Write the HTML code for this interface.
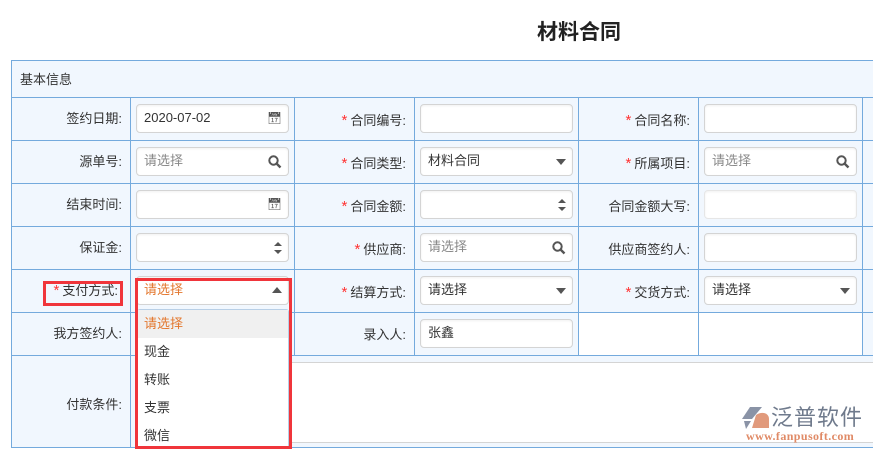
<!DOCTYPE html>
<html><head><meta charset="utf-8">
<style>
*{margin:0;padding:0;box-sizing:border-box}
body{width:873px;height:453px;overflow:hidden;background:#fff;font-family:"Liberation Sans","Noto Sans CJK SC",sans-serif;font-size:13px;color:#333;position:relative}
.a{position:absolute}
.title{left:0;width:1158px;top:16px;text-align:center;font-size:21px;font-weight:bold;color:#222}
.tbl{left:11px;top:60px;width:870px;height:388px;background:#f1f7fe;border:1px solid #74aadd}
.h{background:#74aadd}
.lab{text-align:right;height:20px;line-height:20px;white-space:nowrap}
.lab i{color:#f33;font-style:normal;margin-right:3px;font-size:15px}
.inp{background:#fff;border:1px solid #d4d4d4;border-radius:4px;height:29px;padding-left:7px;line-height:26px;box-shadow:inset 0 1px 2px rgba(0,0,0,.06)}
.ph{color:#888}
.ic{position:absolute;right:6px;top:0;color:#555}
</style></head><body>
<div class="a title">材料合同</div>
<div class="a tbl"></div>
<div class="a" style="left:20px;top:69px">基本信息</div>
<div class="a" style="left:579px;top:313px;width:283px;height:42px;background:#fff"></div>
<div class="a h" style="left:11px;top:97px;width:862px;height:1px"></div>
<div class="a h" style="left:11px;top:140px;width:862px;height:1px"></div>
<div class="a h" style="left:11px;top:183px;width:862px;height:1px"></div>
<div class="a h" style="left:11px;top:226px;width:862px;height:1px"></div>
<div class="a h" style="left:11px;top:269px;width:862px;height:1px"></div>
<div class="a h" style="left:11px;top:312px;width:862px;height:1px"></div>
<div class="a h" style="left:11px;top:355px;width:862px;height:1px"></div>
<div class="a h" style="left:130px;top:97px;width:1px;height:351px"></div>
<div class="a h" style="left:294px;top:97px;width:1px;height:258px"></div>
<div class="a h" style="left:414px;top:97px;width:1px;height:258px"></div>
<div class="a h" style="left:578px;top:97px;width:1px;height:258px"></div>
<div class="a h" style="left:698px;top:97px;width:1px;height:258px"></div>
<div class="a h" style="left:862px;top:97px;width:1px;height:258px"></div>
<div class="a" style="left:136px;top:362px;width:740px;height:81px;background:#fff;border:1px solid #d4d4d4;border-radius:3px"></div>

<div class="a lab" style="left:11px;width:111px;top:109px">签约日期:</div>
<div class="a lab" style="left:11px;width:111px;top:152px">源单号:</div>
<div class="a lab" style="left:11px;width:111px;top:195px">结束时间:</div>
<div class="a lab" style="left:11px;width:111px;top:238px">保证金:</div>
<div class="a lab" style="left:11px;width:107px;top:281px"><i>*</i>支付方式:</div>
<div class="a lab" style="left:11px;width:111px;top:324px">我方签约人:</div>
<div class="a lab" style="left:11px;width:111px;top:395px">付款条件:</div>
<div class="a lab" style="left:295px;width:111px;top:111px"><i>*</i>合同编号:</div>
<div class="a lab" style="left:295px;width:111px;top:154px"><i>*</i>合同类型:</div>
<div class="a lab" style="left:295px;width:111px;top:197px"><i>*</i>合同金额:</div>
<div class="a lab" style="left:295px;width:111px;top:240px"><i>*</i>供应商:</div>
<div class="a lab" style="left:295px;width:111px;top:283px"><i>*</i>结算方式:</div>
<div class="a lab" style="left:295px;width:111px;top:325px">录入人:</div>
<div class="a lab" style="left:579px;width:111px;top:111px"><i>*</i>合同名称:</div>
<div class="a lab" style="left:579px;width:111px;top:154px"><i>*</i>所属项目:</div>
<div class="a lab" style="left:579px;width:111px;top:197px">合同金额大写:</div>
<div class="a lab" style="left:579px;width:111px;top:240px">供应商签约人:</div>
<div class="a lab" style="left:579px;width:111px;top:283px"><i>*</i>交货方式:</div>

<div class="a inp" style="left:136px;top:104px;width:153px">2020-07-02<span class="ic" style="font-size:12px">&#x1F4C5;&#xFE0E;</span></div>
<div class="a inp ph" style="left:136px;top:147px;width:153px">请选择<svg class="ic" style="top:7px" width="14" height="14" viewBox="0 0 14 14"><circle cx="5.5" cy="5.5" r="4.2" fill="none" stroke="#555" stroke-width="2"/><path d="M8.5 8.5L12.5 12.5" stroke="#555" stroke-width="2.4"/></svg></div>
<div class="a inp" style="left:136px;top:190px;width:153px"><span class="ic" style="font-size:12px">&#x1F4C5;&#xFE0E;</span></div>
<div class="a inp" style="left:136px;top:233px;width:153px"><svg class="ic" style="top:7px" width="8" height="14"><path d="M0 5L4 1L8 5Z M0 9L4 13L8 9Z" fill="#555"/></svg></div>
<div class="a inp" style="left:136px;top:276px;width:153px;color:#e3772e">请选择<svg class="ic" style="top:10px" width="10" height="6"><path d="M0 6L5 0L10 6Z" fill="#555"/></svg></div>
<div class="a inp" style="left:420px;top:104px;width:153px"></div>
<div class="a inp" style="left:420px;top:147px;width:153px">材料合同<svg class="ic" style="top:11px" width="10" height="6"><path d="M0 0L5 6L10 0Z" fill="#555"/></svg></div>
<div class="a inp" style="left:420px;top:190px;width:153px"><svg class="ic" style="top:7px" width="8" height="14"><path d="M0 5L4 1L8 5Z M0 9L4 13L8 9Z" fill="#555"/></svg></div>
<div class="a inp ph" style="left:420px;top:233px;width:153px">请选择<svg class="ic" style="top:7px" width="14" height="14" viewBox="0 0 14 14"><circle cx="5.5" cy="5.5" r="4.2" fill="none" stroke="#555" stroke-width="2"/><path d="M8.5 8.5L12.5 12.5" stroke="#555" stroke-width="2.4"/></svg></div>
<div class="a inp" style="left:420px;top:276px;width:153px">请选择<svg class="ic" style="top:11px" width="10" height="6"><path d="M0 0L5 6L10 0Z" fill="#555"/></svg></div>
<div class="a inp" style="left:420px;top:319px;width:153px">张鑫</div>
<div class="a inp" style="left:704px;top:104px;width:153px"></div>
<div class="a inp ph" style="left:704px;top:147px;width:153px">请选择<svg class="ic" style="top:7px" width="14" height="14" viewBox="0 0 14 14"><circle cx="5.5" cy="5.5" r="4.2" fill="none" stroke="#555" stroke-width="2"/><path d="M8.5 8.5L12.5 12.5" stroke="#555" stroke-width="2.4"/></svg></div>
<div class="a inp" style="left:704px;top:190px;width:153px;border-color:#e6e6e6"></div>
<div class="a inp" style="left:704px;top:233px;width:153px"></div>
<div class="a inp" style="left:704px;top:276px;width:153px">请选择<svg class="ic" style="top:11px" width="10" height="6"><path d="M0 0L5 6L10 0Z" fill="#555"/></svg></div>

<div class="a" style="left:137px;top:309px;width:152px;height:140px;background:#fff;border:1px solid #b8cfe6;border-radius:3px"></div>
<div class="a" style="left:138px;top:310px;width:150px;height:28px;background:#f0f0f0"></div>
<div class="a" style="left:144px;top:314px;color:#e3772e;line-height:20px">请选择</div>
<div class="a" style="left:144px;top:342px;line-height:20px">现金</div>
<div class="a" style="left:144px;top:370px;line-height:20px">转账</div>
<div class="a" style="left:144px;top:398px;line-height:20px">支票</div>
<div class="a" style="left:144px;top:426px;line-height:20px">微信</div>
<div class="a" style="left:135px;top:278px;width:157px;height:171px;border:3px solid #f0353b"></div>
<div class="a" style="left:43px;top:281px;width:80px;height:25px;border:3px solid #f0353b"></div>

<svg class="a" style="left:742px;top:407px" width="28" height="22" viewBox="0 0 28 22"><path d="M8 0L20 0L10 12L0 12Z" fill="#8a93a6"/><path d="M2 14L9 14L4 22Z" fill="#8a93a6"/><path d="M14 8C20 4 27 6 27 12L27 21L10 21Z" fill="#e19a7c"/></svg>
<div class="a" style="left:771px;top:404px;font-size:22px;color:#6f7a8c;letter-spacing:1px;line-height:28px">泛普软件</div>
<div class="a" style="left:746px;top:430px;font-size:12px;color:#e08a66;font-family:'Liberation Serif',serif;line-height:13px;font-weight:bold;letter-spacing:0.4px">www.fanpusoft.com</div>
</body></html>
